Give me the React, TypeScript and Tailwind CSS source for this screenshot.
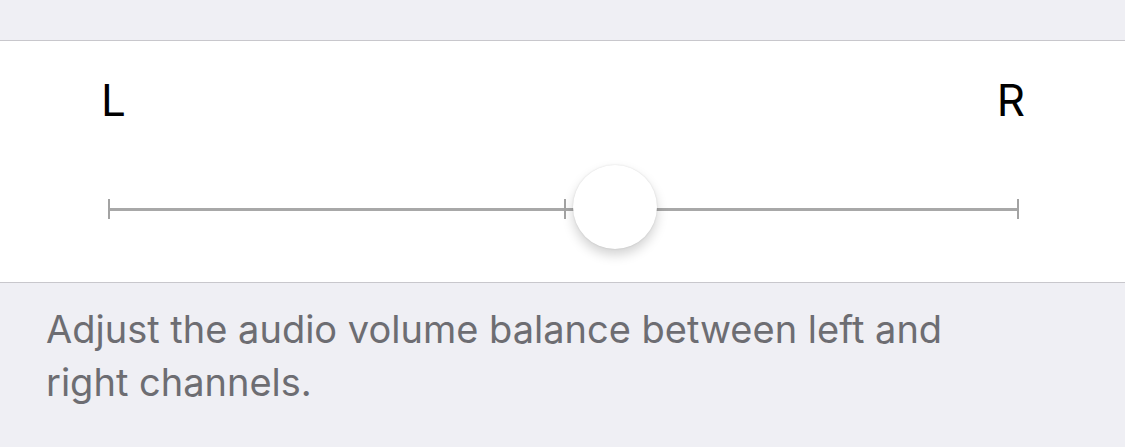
import React from 'react';

export default function App() {
  return (
    <div
      className="w-[1125px] h-[447px] bg-[#efeff4] flex flex-col overflow-hidden"
      style={{ fontFamily: 'Inter, "Noto Sans", sans-serif' }}
    >
      <div className="h-[40px] shrink-0" />
      <div className="h-[243px] shrink-0 bg-white border-y border-[#c8c7cc] flex flex-col">
        <div className="flex justify-between pl-[101px] pr-[100px] pt-[28px] text-[44px] leading-[62px] text-black">
          <span>L</span>
          <span>R</span>
        </div>
        <div className="relative ml-[108px] mr-[106px] mt-[68px] h-[20px] flex items-center">
          <div className="absolute left-0 top-0 w-[2px] h-[20px] bg-[#a3a3a3]" />
          <div className="w-full h-[3px] bg-[#a8a8a8]" />
          <div className="absolute left-[456px] top-0 w-[2px] h-[20px] bg-[#a3a3a3]" />
          <div className="absolute right-0 top-0 w-[2px] h-[20px] bg-[#a3a3a3]" />
          <div className="absolute left-[465px] top-[-34px] w-[84px] h-[84px] rounded-full bg-white shadow-[0_6px_12px_rgba(0,0,0,0.18),0_0_2px_rgba(0,0,0,0.12)]" />
        </div>
      </div>
      <p className="pl-[46px] w-[1000px] pt-[20px] text-[38px] leading-[53px] text-[#6d6d72]">
        Adjust the audio volume balance between left and right channels.
      </p>
    </div>
  );
}
